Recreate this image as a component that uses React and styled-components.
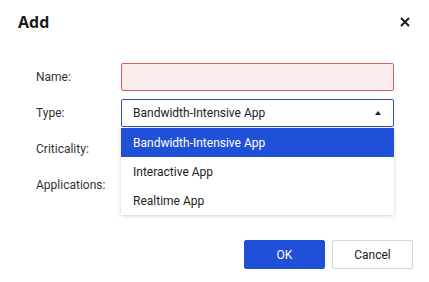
import React from 'react';
import styled, { createGlobalStyle } from 'styled-components';

const GlobalStyle = createGlobalStyle`
  body {
    margin: 0;
    background: #fff;
    font-family: Roboto, "Noto Sans", sans-serif;
    color: #333;
  }
`;

const Dialog = styled.div`
  width: 429px;
  height: 282px;
  box-sizing: border-box;
  display: flex;
  flex-direction: column;
`;

const Header = styled.div`
  display: flex;
  align-items: center;
  justify-content: space-between;
  height: 44px;
  padding: 0 18px;
`;

const Title = styled.h2`
  margin: 0;
  font-family: "Open Sans", sans-serif;
  font-size: 16px;
  font-weight: 700;
  color: #1a1a1a;
`;

const Close = styled.button`
  border: none;
  background: none;
  padding: 0;
  width: 12px;
  height: 12px;
  display: flex;
  cursor: pointer;
`;

const Form = styled.div`
  display: flex;
  flex-direction: column;
  gap: 8px;
  padding: 19px 35px 0 36px;
`;

const Row = styled.div`
  display: flex;
  align-items: center;
  height: 28px;
`;

const Label = styled.label`
  width: 85px;
  font-size: 12px;
  color: #333;
`;

const Field = styled.div`
  position: relative;
  flex: 1;
  height: 100%;
`;

const Input = styled.input`
  box-sizing: border-box;
  width: 100%;
  height: 100%;
  border: 1px solid ${(p) => (p.$error ? '#e65a5a' : '#ccc')};
  border-radius: 2px;
  background: ${(p) => (p.$error ? '#f9eeed' : '#fff')};
  outline: none;
`;

const Select = styled.div`
  box-sizing: border-box;
  height: 100%;
  display: flex;
  align-items: center;
  justify-content: space-between;
  padding: 0 12px 0 11px;
  border: 1px solid ${(p) => (p.$open ? '#2a52d4' : '#ccc')};
  border-radius: 2px;
  font-size: 12px;
  color: #222;
`;

const Caret = styled.span`
  width: 0;
  height: 0;
  border-left: 3px solid transparent;
  border-right: 3px solid transparent;
  border-bottom: 4px solid #222;
`;

const Menu = styled.ul`
  position: absolute;
  top: 29px;
  left: 0;
  right: 0;
  margin: 0;
  padding: 0;
  list-style: none;
  background: #fff;
  box-shadow: 0 1px 4px rgba(0, 0, 0, 0.18);
  z-index: 2;
`;

const Option = styled.li`
  height: 29px;
  display: flex;
  align-items: center;
  padding: 0 12px;
  font-size: 12px;
  color: ${(p) => (p.$active ? '#fff' : '#222')};
  background: ${(p) => (p.$active ? '#2150d8' : '#fff')};
`;

const Footer = styled.div`
  display: flex;
  justify-content: flex-end;
  gap: 7px;
  margin-top: auto;
  padding: 0 16px 13px;
`;

const Button = styled.button`
  width: 81px;
  height: 29px;
  border-radius: 2px;
  font-family: inherit;
  font-size: 12px;
  cursor: pointer;
  border: 1px solid ${(p) => (p.$primary ? '#2150d8' : '#d6d6d6')};
  background: ${(p) => (p.$primary ? '#2150d8' : '#fff')};
  color: ${(p) => (p.$primary ? '#fff' : '#222')};
`;

const options = ['Bandwidth-Intensive App', 'Interactive App', 'Realtime App'];

export default function App() {
  return (
    <Dialog>
      <GlobalStyle />
      <Header>
        <Title>Add</Title>
        <Close aria-label="Close">
          <svg width="12" height="12" viewBox="0 0 12 12">
            <path d="M2 2L10 10M10 2L2 10" stroke="#1a1a1a" strokeWidth="2" />
          </svg>
        </Close>
      </Header>
      <Form>
        <Row>
          <Label>Name:</Label>
          <Field>
            <Input $error />
          </Field>
        </Row>
        <Row>
          <Label>Type:</Label>
          <Field>
            <Select $open>
              Bandwidth-Intensive App
              <Caret />
            </Select>
            <Menu>
              {options.map((o, i) => (
                <Option key={o} $active={i === 0}>
                  {o}
                </Option>
              ))}
            </Menu>
          </Field>
        </Row>
        <Row>
          <Label>Criticality:</Label>
          <Field />
        </Row>
        <Row>
          <Label>Applications:</Label>
          <Field />
        </Row>
      </Form>
      <Footer>
        <Button $primary>OK</Button>
        <Button>Cancel</Button>
      </Footer>
    </Dialog>
  );
}
